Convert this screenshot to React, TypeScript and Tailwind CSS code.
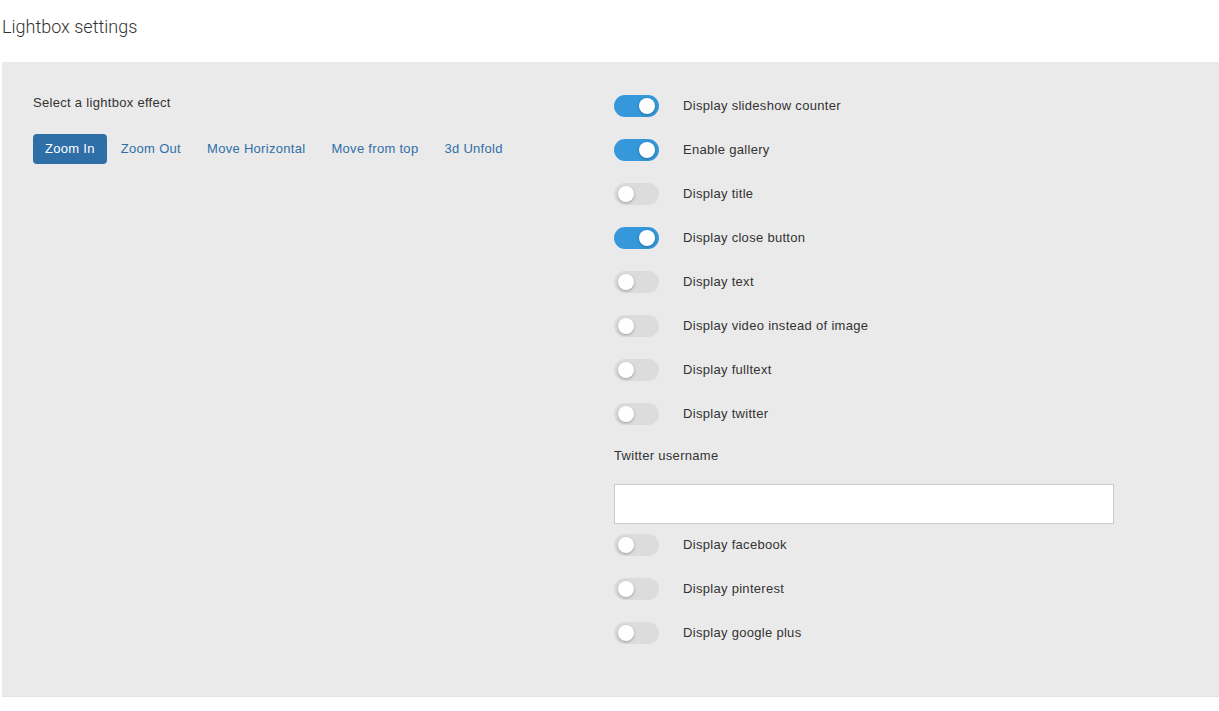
import React from "react";

function Toggle({ on }: { on: boolean }) {
  return (
    <div
      className={
        "relative h-[22px] w-[45px] shrink-0 rounded-full " +
        (on ? "bg-[#3498db]" : "bg-[#dcdcdc]")
      }
    >
      <div
        className={
          "absolute top-[3px] h-[16px] w-[16px] rounded-full bg-white shadow-[0_1px_3px_rgba(0,0,0,0.3)] " +
          (on ? "right-[4px]" : "left-[4px]")
        }
      />
    </div>
  );
}

function Row({ on, label, className = "" }: { on: boolean; label: string; className?: string }) {
  return (
    <div className={"flex h-[22px] items-center " + className}>
      <Toggle on={on} />
      <span className="ml-[24px] -mt-[1px] text-[13px] tracking-[0.3px] text-[#333]">{label}</span>
    </div>
  );
}

export default function App() {
  const effects = ["Zoom In", "Zoom Out", "Move Horizontal", "Move from top", "3d Unfold"];
  return (
    <div
      className="min-h-[711px] bg-white"
      style={{ fontFamily: '"Liberation Sans", Arial, Helvetica, sans-serif' }}
    >
      <div className="h-[62px] pl-[2px] pt-[15px]">
        <h1
          className="text-[18px] font-light leading-[24px] text-[#333]"
          style={{ fontFamily: 'Roboto, "Liberation Sans", Arial, sans-serif' }}
        >
          Lightbox settings
        </h1>
      </div>
      <div className="ml-[2px] flex h-[635px] bg-[#eaeaea] pl-[31px] pt-[33px] border-b border-[#e2e2e2]">
        <div className="w-[581px] shrink-0">
          <div className="text-[13px] leading-[16px] tracking-[0.3px] text-[#333]">Select a lightbox effect</div>
          <div className="mt-[23px] flex items-center gap-[2px]">
            {effects.map((e, i) => (
              <button
                key={e}
                className={
                  "h-[30px] rounded-[4px] px-[12px] text-[13px] tracking-[0.3px] " +
                  (i === 0 ? "bg-[#2f6fa8] text-white" : "text-[#2f6fa8]")
                }
              >
                {e}
              </button>
            ))}
          </div>
        </div>
        <div className="flex flex-col">
          <Row on={true} label="Display slideshow counter" />
          <Row on={true} label="Enable gallery" className="mt-[22px]" />
          <Row on={false} label="Display title" className="mt-[22px]" />
          <Row on={true} label="Display close button" className="mt-[22px]" />
          <Row on={false} label="Display text" className="mt-[22px]" />
          <Row on={false} label="Display video instead of image" className="mt-[22px]" />
          <Row on={false} label="Display fulltext" className="mt-[22px]" />
          <Row on={false} label="Display twitter" className="mt-[22px]" />
          <div className="mt-[23px] text-[13px] leading-[16px] tracking-[0.3px] text-[#333]">Twitter username</div>
          <input
            className="mt-[20px] h-[40px] w-[500px] border border-[#cccccc] bg-white outline-none"
            type="text"
          />
          <Row on={false} label="Display facebook" className="mt-[10px]" />
          <Row on={false} label="Display pinterest" className="mt-[22px]" />
          <Row on={false} label="Display google plus" className="mt-[22px]" />
        </div>
      </div>
    </div>
  );
}
